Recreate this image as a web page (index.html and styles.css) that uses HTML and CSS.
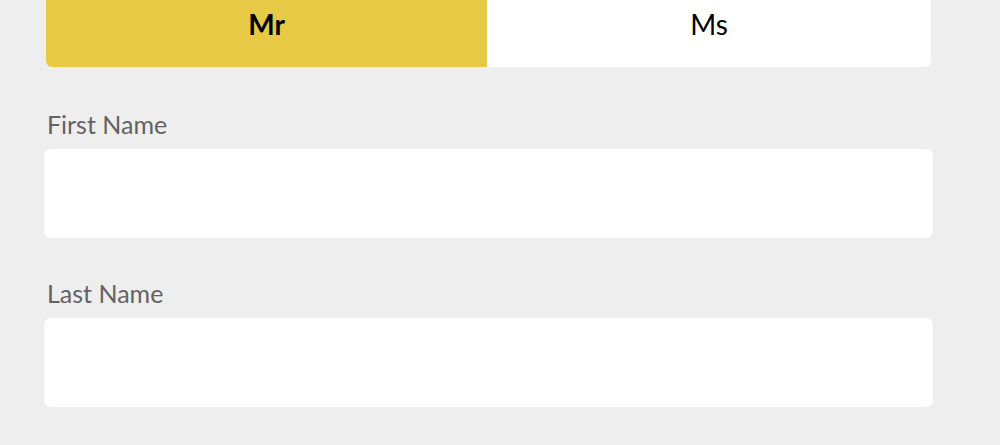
FILE: index.html
```html
<!DOCTYPE html>
<html lang="en">
<head>
<meta charset="utf-8">
<title>Form</title>
<link rel="stylesheet" href="styles.css">
</head>
<body>
<form class="form">
  <div class="toggle">
    <button type="button" class="toggle-btn is-active">Mr</button>
    <button type="button" class="toggle-btn">Ms</button>
  </div>
  <div class="field field-first">
    <label class="field-label" for="first">First Name</label>
    <input class="field-input" id="first" type="text">
  </div>
  <div class="field">
    <label class="field-label" for="last">Last Name</label>
    <input class="field-input" id="last" type="text">
  </div>
</form>
</body>
</html>
```
FILE: styles.css
```css
html, body {
  margin: 0;
  padding: 0;
  background: #eeeeee;
  font-family: "Lato", "Liberation Sans", sans-serif;
}
.form {
  width: 889px;
  padding-left: 44px;
  display: flex;
  flex-direction: column;
}
.toggle {
  display: flex;
  margin: -20px 2px 0 2px;
  height: 87px;
  border-radius: 0 0 6px 6px;
  overflow: hidden;
  background: #ffffff;
}
.toggle-btn {
  flex: 1 1 0;
  border: 0;
  margin: 0;
  padding: 0;
  background: #ffffff;
  font-family: inherit;
  font-size: 28px;
  color: #000;
  font-weight: 400;
}
.toggle-btn.is-active {
  flex: 0 0 441px;
  background: #e8c946;
  font-weight: 700;
}
.field {
  display: flex;
  flex-direction: column;
  margin-top: 39px;
}
.field-first {
  margin-top: 41px;
}
.field-label {
  font-size: 25px;
  line-height: 32px;
  color: #636363;
  padding-left: 3px;
  margin-bottom: 9px;
}
.field-input {
  box-sizing: border-box;
  height: 89px;
  width: 889px;
  border: 0;
  border-radius: 7px;
  background: #ffffff;
  margin: 0;
  padding: 0 16px;
  font-family: inherit;
  font-size: 24px;
}
```
